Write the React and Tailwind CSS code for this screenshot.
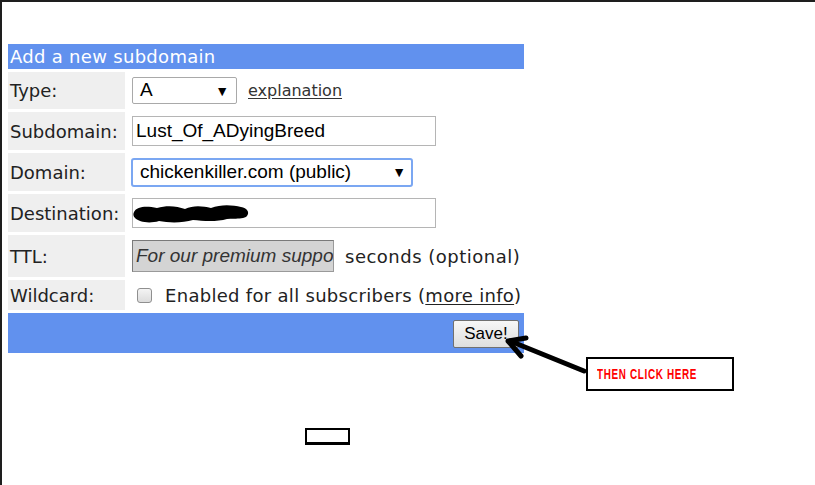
import React from 'react';

function Label({ children }) {
    return (
        <div className="w-[117px] shrink-0 h-full bg-[#efefef] flex items-center pl-[2px] text-[18px] text-[#222]">
            {children}
        </div>
    );
}

function Row({ h, label, children }) {
    return (
        <div className={`flex ${h}`}>
            <Label>{label}</Label>
            <div className="flex-1 flex items-center pl-[7px]">{children}</div>
        </div>
    );
}

function Caret() {
    return <span className="text-[14px] text-black leading-none">▼</span>;
}

export default function App() {
    return (
        <div className="relative w-[815px] h-[485px] overflow-hidden bg-white border-t-2 border-l-2 border-[#1e1e1e] font-['DejaVu_Sans',Verdana,sans-serif]">
            <div className="pt-[42px] pl-[6px]">
                <div className="w-[516px] flex flex-col gap-[3px]">
                    <div className="h-[25px] bg-[#6191ee] text-white text-[18px] tracking-[0.3px] leading-[25px] pl-[2px]">
                        Add a new subdomain
                    </div>

                    <Row h="h-[37px]" label="Type:">
                        <div className="w-[105px] h-[27px] border border-[#a9a9a9] rounded-[2px] flex items-center justify-between pl-[7px] pr-[7px] font-['Liberation_Sans',Arial,sans-serif] text-[19px] text-black">
                            <span>A</span>
                            <Caret />
                        </div>
                        <a className="ml-[11px] text-[16px] text-[#333] underline underline-offset-2">explanation</a>
                    </Row>

                    <Row h="h-[38px]" label="Subdomain:">
                        <div className="w-[304px] h-[30px] border border-[#b5b5b5] flex items-center pl-[3px] font-['Liberation_Sans',Arial,sans-serif] text-[19px] text-black">
                            Lust_Of_ADyingBreed
                        </div>
                    </Row>

                    <Row h="h-[38px]" label="Domain:">
                        <div className="-ml-px w-[282px] h-[29px] border-2 border-[#7ba7f2] rounded-[3px] flex items-center justify-between pl-[7px] pr-[5px] font-['Liberation_Sans',Arial,sans-serif] text-[19px] text-black">
                            <span>chickenkiller.com (public)</span>
                            <Caret />
                        </div>
                    </Row>

                    <Row h="h-[38px]" label="Destination:">
                        <div className="relative w-[304px] h-[30px] border border-[#b5b5b5]">
                            <svg className="absolute left-0 top-[4px]" width="118" height="22" viewBox="0 0 118 22">
                                <path
                                    d="M1 9 C4 3 14 3 24 5 C34 2 44 3 52 6 C60 2 70 3 78 5 C88 1 100 2 108 4 C114 5 117 9 114 13 C110 17 100 15 94 16 C84 19 70 18 60 17 C50 20 36 20 26 18 C16 21 6 19 2 15 C0 13 0 11 1 9 Z"
                                    fill="#000"
                                />
                            </svg>
                        </div>
                    </Row>

                    <Row h="h-[42px]" label="TTL:">
                        <input
                            readOnly
                            placeholder="For our premium support members only"
                            className="w-[202px] h-[32px] bg-[#d4d4d4] border border-[#9a9a9a] border-t-[#7a7a7a] border-l-[#7a7a7a] pl-[3px] outline-none font-['Liberation_Sans',Arial,sans-serif] italic text-[19px] placeholder:text-[#333] placeholder:italic"
                        />
                        <span className="ml-[11px] text-[18px] tracking-[0.5px] text-[#222] whitespace-nowrap">seconds (optional)</span>
                    </Row>

                    <Row h="h-[30px]" label="Wildcard:">
                        <div className="ml-[5px] w-[15px] h-[15px] rounded-[3px] border border-[#8f8f8f] bg-gradient-to-b from-[#f4f4f4] to-[#dcdcdc]" />
                        <span className="ml-[13px] text-[18px] tracking-[0.3px] text-[#222] whitespace-nowrap">
                            Enabled for all subscribers (<a className="underline underline-offset-2">more info</a>)
                        </span>
                    </Row>

                    <div className="h-[40px] bg-[#6191ee] flex justify-end items-start pt-[7px] pr-[5px]">
                        <div className="w-[66px] h-[28px] rounded-[2px] border border-[#707070] bg-gradient-to-b from-[#f7f7f7] to-[#dedede] flex items-center justify-center font-['Liberation_Sans',Arial,sans-serif] text-[17px] text-black">
                            Save!
                        </div>
                    </div>
                </div>
            </div>

            <svg className="absolute -left-[2px] -top-[2px] pointer-events-none" width="815" height="485">
                <path d="M584 371 L510 341" stroke="#000" strokeWidth="5" strokeLinecap="round" />
                <path d="M526 338 L508 341 L521 356" stroke="#000" strokeWidth="5" fill="none" strokeLinejoin="round" strokeLinecap="round" />
            </svg>

            <div className="absolute left-[584px] top-[355px] w-[148px] h-[34px] border-2 border-black bg-white flex items-center pl-[9px]">
                <span className="inline-block origin-left scale-x-[0.66] font-['Liberation_Sans',Arial,sans-serif] font-bold text-[15px] text-[#ff0000] whitespace-nowrap tracking-[1px]">
                    THEN CLICK HERE
                </span>
            </div>

            <div className="absolute left-[303px] top-[426px] w-[45px] h-[17px] border-2 border-b-[3px] border-black bg-white" />
        </div>
    );
}
